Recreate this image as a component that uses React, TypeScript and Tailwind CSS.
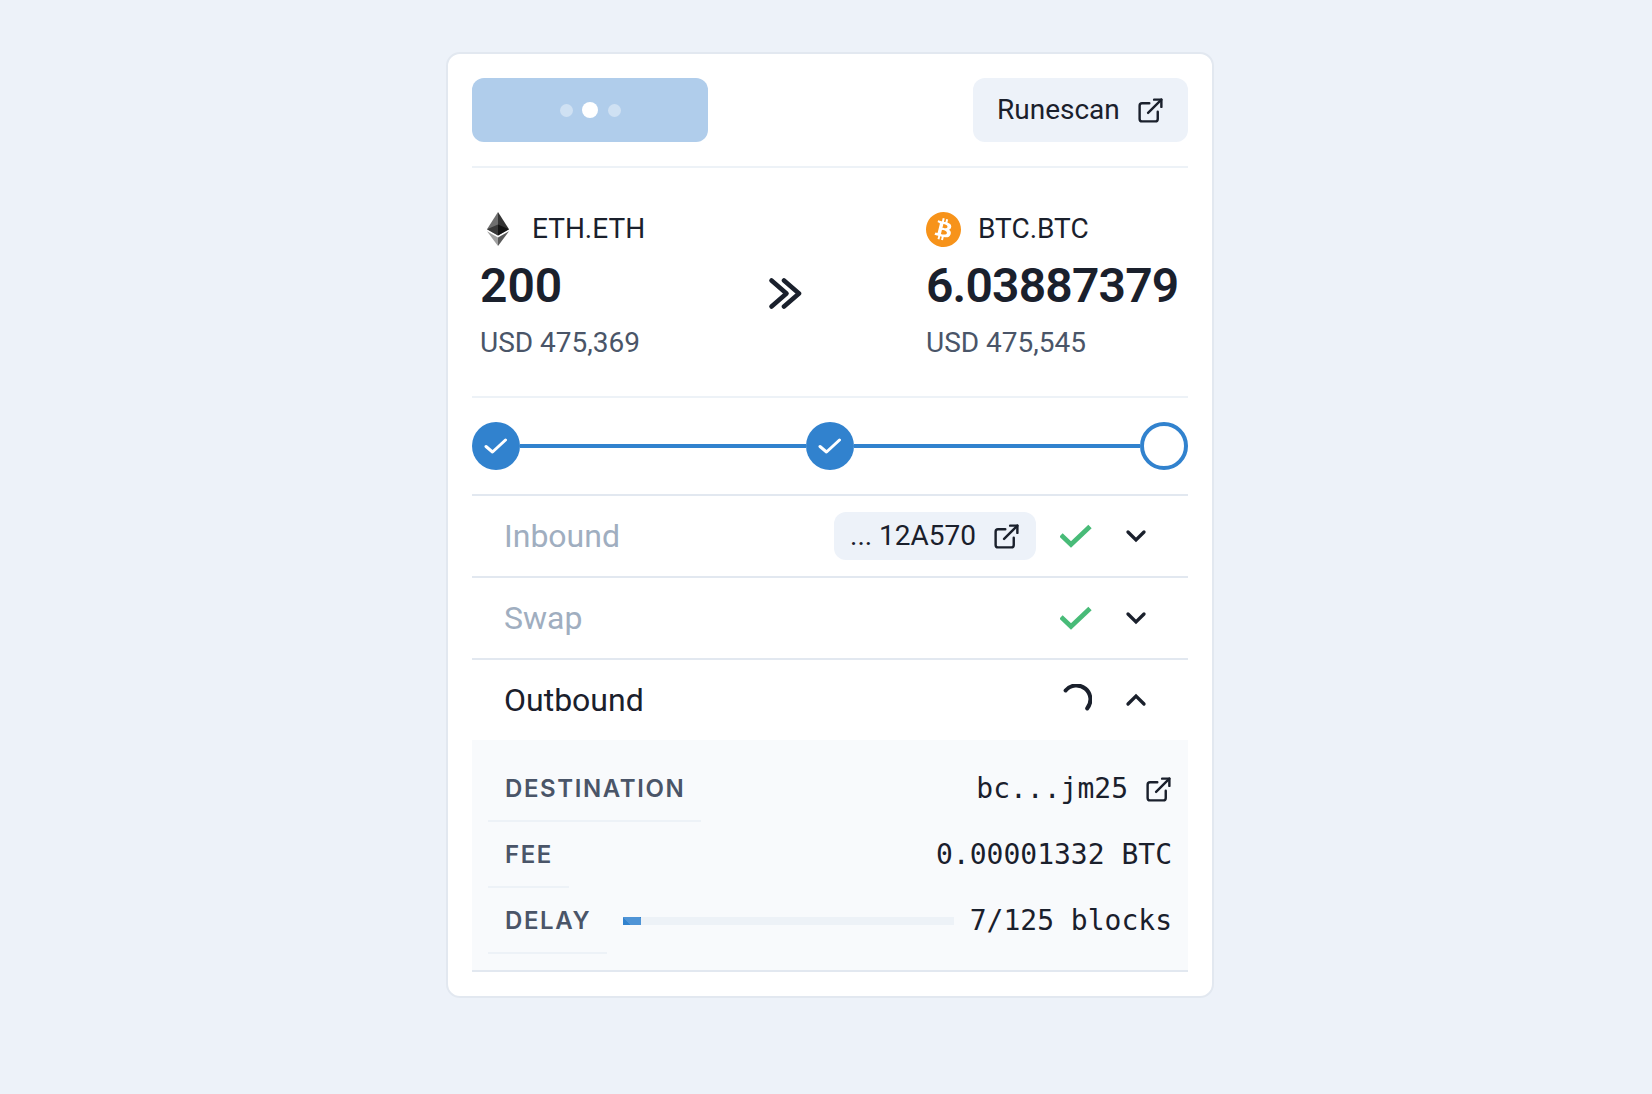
import React from "react";
import { SiBitcoin } from "react-icons/si";

const ExtLink = ({ className = "" }: { className?: string }) => (
  <svg viewBox="0 0 24 24" width="29" height="29" fill="none" stroke="currentColor" strokeWidth="2" strokeLinecap="round" strokeLinejoin="round" className={`shrink-0 ${className}`}>
    <path d="M18 13v6a2 2 0 0 1-2 2H5a2 2 0 0 1-2-2V8a2 2 0 0 1 2-2h6" />
    <path d="M15 3h6v6" />
    <path d="M10 14 21 3" />
  </svg>
);

const Check = () => (
  <svg viewBox="0 0 32 24" width="32" height="24" fill="none" stroke="#48bb78" strokeWidth="4.8">
    <path d="M1 11 11 20.5 30 2.5" />
  </svg>
);

const Chevron = ({ up = false }: { up?: boolean }) => (
  <svg viewBox="0 0 24 24" width="32" height="32" fill="none" stroke="#1a202c" strokeWidth="2.5" strokeLinecap="round" strokeLinejoin="miter">
    <path d={up ? "M6 15l6-6 6 6" : "M6 9l6 6 6-6"} />
  </svg>
);

const Spinner = () => (
  <svg viewBox="0 0 32 32" width="32" height="32" fill="none" stroke="#1a202c" strokeWidth="4" strokeLinecap="round">
    <path d="M5.6 6.5A14 14 0 0 1 27.2 24.4" />
  </svg>
);

const Step = ({ done }: { done: boolean }) =>
  done ? (
    <div className="w-12 h-12 rounded-full bg-[#3182ce] flex items-center justify-center shrink-0">
      <svg viewBox="0 0 24 18" width="24" height="18" fill="none" stroke="#fff" strokeWidth="3" strokeLinecap="round" strokeLinejoin="round">
        <path d="M2 9.5 8.5 15 21.5 3" />
      </svg>
    </div>
  ) : (
    <div className="w-12 h-12 rounded-full border-4 border-[#3182ce] bg-white shrink-0" />
  );

const Row = ({ label, muted, children, right }: { label: string; muted?: boolean; children?: React.ReactNode; right: React.ReactNode }) => (
  <div className="h-20 flex items-center pl-8 pr-9">
    <div className={`text-[32px] flex-1 ${muted ? "text-[#a0aec0]" : "text-[#1a202c]"}`}>{label}</div>
    {children}
    {right}
  </div>
);

const Status = ({ icon, up }: { icon: React.ReactNode; up?: boolean }) => (
  <div className="flex items-center">
    <div className="w-8 ml-6 flex justify-center">{icon}</div>
    <div className="ml-7"><Chevron up={up} /></div>
  </div>
);

const Mono = "font-['DejaVu_Sans_Mono',monospace] text-[28px] text-[#1a202c]";
const Label = "text-[24px] font-semibold tracking-[1.6px] text-[#4a5568] font-['Inter',sans-serif] uppercase h-[66px] flex items-center pl-[17px] pr-4 pt-[2px] border-b-2 border-[#edf2f7]";

export default function App() {
  return (
    <div className="min-h-[1094px] bg-[#edf2f9] pl-[446px] pt-[52px] font-['Roboto',sans-serif] text-[#1a202c]">
      <div className="w-[768px] bg-white border-2 border-[#e2e8f0] rounded-[14px] p-6">
        <div className="flex justify-between pb-6 border-b-2 border-[#edf2f7]">
          <div className="w-[236px] h-16 rounded-xl bg-[#b0cdeb] flex items-center justify-center gap-[9.5px]">
            <span className="w-[13px] h-[13px] rounded-full bg-white opacity-40" />
            <span className="w-4 h-4 rounded-full bg-white" />
            <span className="w-[13px] h-[13px] rounded-full bg-white opacity-40" />
          </div>
          <div className="w-[215px] h-16 rounded-xl bg-[#edf2f9] flex items-center pl-6 gap-4 text-[28px]">
            <span>Runescan</span>
            <ExtLink />
          </div>
        </div>

        <div className="flex pt-10 pb-8 border-b-2 border-[#edf2f7]">
          <div className="w-[454px] pl-2">
            <div className="flex items-center h-[42px] text-[28px]">
              <svg viewBox="0 0 256 417" width="22" height="34" preserveAspectRatio="none" className="mr-[23px] ml-[7px]">
                <path fill="#6f6f6f" d="M127.9 0 0 212.4l127.9 75.6z" />
                <path fill="#343434" d="M127.9 0 256 212.4 127.9 288z" />
                <path fill="#141414" d="m127.9 288 128-75.6-128-58.2z" />
                <path fill="#393939" d="m0 212.4 127.9 75.6V154.2z" />
                <path fill="#5a5a5a" d="m127.9 312.2 128.1-75.6L127.9 417z" />
                <path fill="#a0a0a0" d="M127.9 417V312.2L0 236.6z" />
              </svg>
              <span>ETH.ETH</span>
            </div>
            <div className="flex items-center">
              <div className="text-[48px] font-semibold leading-[72px] w-[288px]">200</div>
              <svg viewBox="0 0 34 34" width="34" height="34" fill="none" stroke="#1a202c" strokeWidth="4.6" strokeLinecap="round" strokeLinejoin="round" className="mt-4">
                <path d="M3.5 3.5 18.5 16.5 3.5 29.5" />
                <path d="M16 3.5 31 16.5 16 29.5" />
              </svg>
            </div>
            <div className="text-[28px] text-[#4a5568] leading-[42px]">USD 475,369</div>
          </div>
          <div>
            <div className="flex items-center h-[42px] text-[28px]">
              <SiBitcoin size={35} color="#f7931a" className="mr-[17px]" />
              <span>BTC.BTC</span>
            </div>
            <div className="text-[48px] font-semibold tracking-[-0.8px] leading-[72px]">6.03887379</div>
            <div className="text-[28px] text-[#4a5568] leading-[42px]">USD 475,545</div>
          </div>
        </div>

        <div className="flex items-center py-6 border-b-2 border-[#e2e8f0]">
          <Step done />
          <div className="flex-1 h-1 bg-[#3182ce]" />
          <Step done />
          <div className="flex-1 h-1 bg-[#3182ce]" />
          <Step done={false} />
        </div>

        <div className="border-b-2 border-[#e2e8f0]">
          <Row label="Inbound" muted right={<Status icon={<Check />} />}>
            <div className="w-[202px] h-12 rounded-xl bg-[#edf2f9] flex items-center pl-4 gap-4 text-[28px]">
              <span>... 12A570</span>
              <ExtLink />
            </div>
          </Row>
        </div>
        <div className="border-b-2 border-[#e2e8f0]">
          <Row label="Swap" muted right={<Status icon={<Check />} />} />
        </div>
        <Row label="Outbound" right={<Status icon={<Spinner />} up />} />

        <div className="bg-[#f8fafc] h-[232px] border-b-2 border-[#e2e8f0] px-4 pt-4">
          <div className="flex items-center justify-between h-[66px]">
            <div className={Label}>Destination</div>
            <div className={`${Mono} flex items-center gap-4 -mr-px`}><span>bc...jm25</span><ExtLink /></div>
          </div>
          <div className="flex items-center justify-between h-[66px]">
            <div className={Label}>Fee</div>
            <div className={Mono}>0.00001332 BTC</div>
          </div>
          <div className="flex items-center h-[66px]">
            <div className={Label}>Delay</div>
            <div className="flex-1 mx-4 h-2 bg-[#edf2f7]">
              <div className="h-2 w-[18px] bg-[linear-gradient(45deg,#3182ce_30%,#4f94d6_30%,#4f94d6_93%,#3182ce_93%)]" />
            </div>
            <div className={Mono}>7/125 blocks</div>
          </div>
        </div>
      </div>
    </div>
  );
}
